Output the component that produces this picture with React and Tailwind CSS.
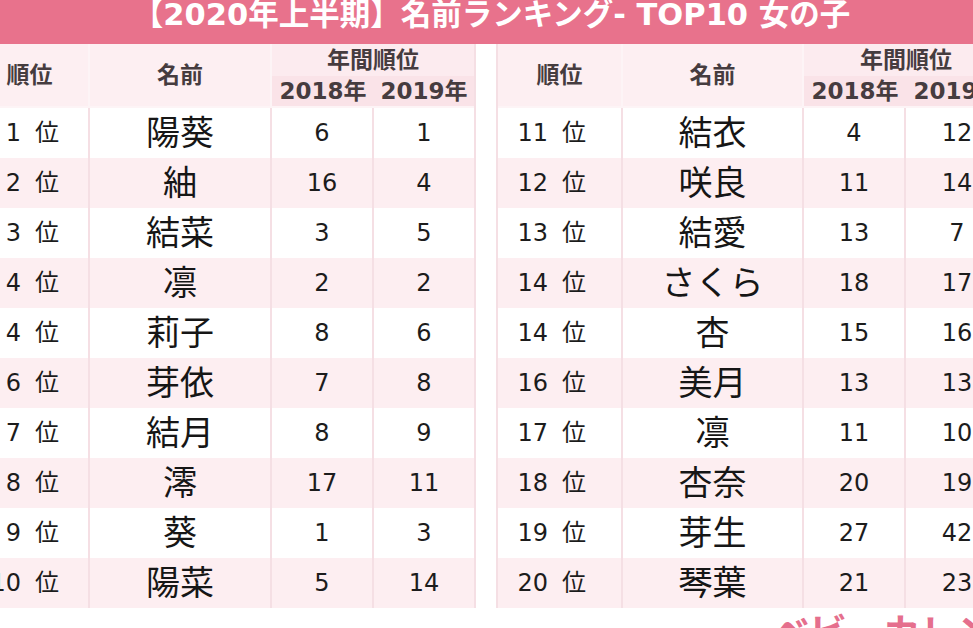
import React from 'react';

const FONT = "font-['DejaVu_Sans','Noto_Sans_CJK_JP',sans-serif]";

const leftRows = [
  ['1', '陽葵', '6', '1'],
  ['2', '紬', '16', '4'],
  ['3', '結菜', '3', '5'],
  ['4', '凛', '2', '2'],
  ['4', '莉子', '8', '6'],
  ['6', '芽依', '7', '8'],
  ['7', '結月', '8', '9'],
  ['8', '澪', '17', '11'],
  ['9', '葵', '1', '3'],
  ['10', '陽菜', '5', '14'],
];

const rightRows = [
  ['11', '結衣', '4', '12'],
  ['12', '咲良', '11', '14'],
  ['13', '結愛', '13', '7'],
  ['14', 'さくら', '18', '17'],
  ['14', '杏', '15', '16'],
  ['16', '美月', '13', '13'],
  ['17', '凛', '11', '10'],
  ['18', '杏奈', '20', '19'],
  ['19', '芽生', '27', '42'],
  ['20', '琴葉', '21', '23'],
];

const line = 'border-[#f5dfe4]';
const headLine = 'border-[#fdf4f6]';
const head = 'text-[23px] font-bold text-[#463c3f]';

function RankTable({ rows, cols, className = '' }) {
  return (
    <div
      className={`grid shrink-0 ${cols} grid-rows-[32px_32px_repeat(10,50px)] ${className}`}
    >
      {/* header */}
      <div className={`row-span-2 flex items-center justify-center border-r-2 border-b-2 ${headLine} bg-[#fdeff2] ${head}`}>
        順位
      </div>
      <div className={`row-span-2 flex items-center justify-center border-r-2 border-b-2 ${headLine} bg-[#fdeff2] ${head}`}>
        名前
      </div>
      <div className={`col-span-2 flex items-center justify-center bg-[#fcebef] ${head}`}>
        年間順位
      </div>
      <div className={`flex items-center justify-center border-b-2 ${headLine} bg-[#fae3e8] ${head}`}>
        2018年
      </div>
      <div className={`flex items-center justify-center border-b-2 ${headLine} bg-[#fae3e8] ${head}`}>
        2019年
      </div>

      {rows.map(([rank, name, y18, y19], i) => {
        const bg = i % 2 === 1 ? 'bg-[#fdeef1]' : 'bg-white';
        return (
          <React.Fragment key={i}>
            <div className={`flex items-center border-r-2 ${line} ${bg} text-[24px] text-[#1c1c1c]`}>
              <span className="inline-block w-[50px] text-right">{rank}</span>
              <span className="ml-[14px]">位</span>
            </div>
            <div className={`flex items-center justify-center border-r-2 ${line} ${bg} text-[34px] text-[#161616]`}>
              {name}
            </div>
            <div className={`flex items-center justify-center border-r-2 ${line} ${bg} text-[24px] text-[#1c1c1c]`}>
              {y18}
            </div>
            <div className={`flex items-center justify-center ${bg} text-[24px] text-[#1c1c1c]`}>
              {y19}
            </div>
          </React.Fragment>
        );
      })}
    </div>
  );
}

export default function App() {
  return (
    <div className={`relative h-[628px] w-[973px] overflow-hidden bg-white ${FONT}`}>
      <div className="flex h-[44px] justify-center bg-[#e8728c] pl-[10px]">
        <h1 className="whitespace-nowrap text-[30.5px] font-bold leading-[30px] text-white">
          【2020年上半期】名前ランキング- TOP10 女の子
        </h1>
      </div>

      <div className="flex gap-[20px]">
        <RankTable
          rows={leftRows}
          cols="grid-cols-[119px_182px_102px_100px]"
          className={`ml-[-29px] border-r-2 ${line}`}
        />
        <RankTable
          rows={rightRows}
          cols="grid-cols-[125px_181px_102px_102px]"
          className={`border-l-2 ${line}`}
        />
      </div>

      <div className="mt-[6px] flex pl-[772px]">
        <span className="whitespace-nowrap text-[38px] font-bold leading-none tracking-[-1px] text-[#e56f8d]">
          ベビーカレンダー
        </span>
      </div>
    </div>
  );
}
